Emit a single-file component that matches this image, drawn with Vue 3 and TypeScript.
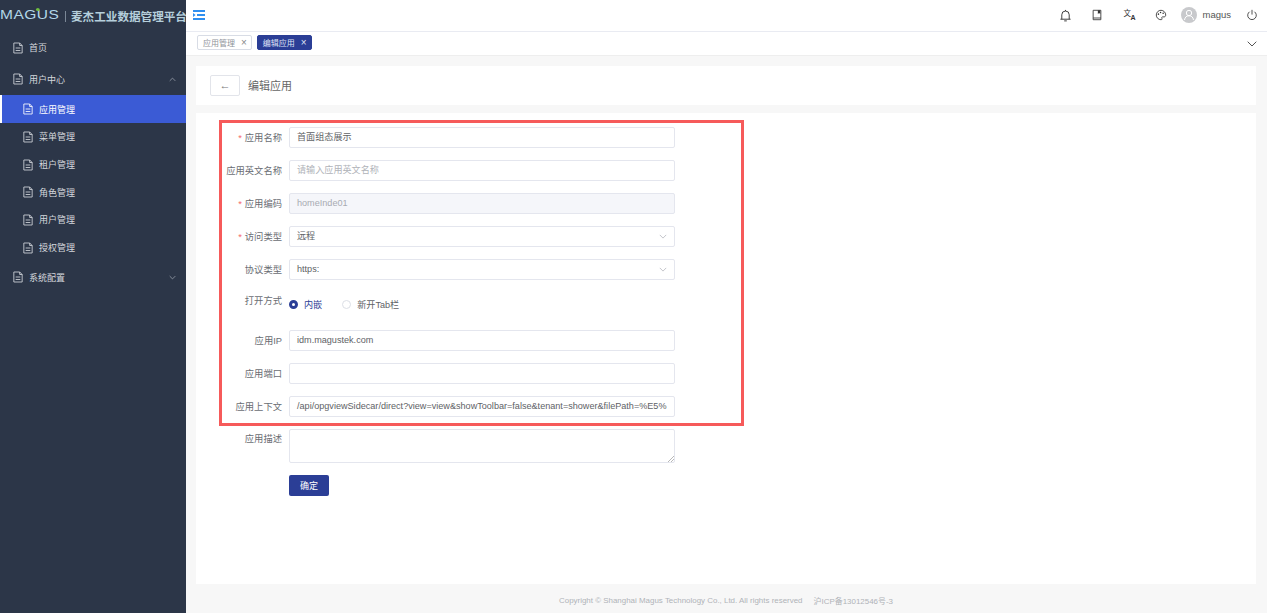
<script setup lang="ts">
interface NavItem { label: string; active?: boolean }
const children: NavItem[] = [
  { label: '应用管理', active: true },
  { label: '菜单管理' },
  { label: '租户管理' },
  { label: '角色管理' },
  { label: '用户管理' },
  { label: '授权管理' },
]
</script>

<template>
  <div class="app">
    <aside class="side">
      <div class="logo">
        <span class="mark">MAGUS<i class="leaf"></i></span><i class="bar"></i><span class="name">麦杰工业数据管理平台</span>
      </div>
      <div class="top item home"><svg class="doc" viewBox="0 0 12 14"><path d="M1 1h7l3 3v9H1zM8 1v3h3M3.2 7h5.6M3.2 10h5.6" /></svg>首页</div>
      <div class="top item"><svg class="doc" viewBox="0 0 12 14"><path d="M1 1h7l3 3v9H1zM8 1v3h3M3.2 7h5.6M3.2 10h5.6" /></svg>用户中心<svg class="arr" viewBox="0 0 10 6"><path d="M1 5l4-4 4 4" /></svg></div>
      <div v-for="c in children" :key="c.label" class="sub item" :class="{ on: c.active }"><svg class="doc" viewBox="0 0 12 14"><path d="M1 1h7l3 3v9H1zM8 1v3h3M3.2 7h5.6M3.2 10h5.6" /></svg>{{ c.label }}</div>
      <div class="top item"><svg class="doc" viewBox="0 0 12 14"><path d="M1 1h7l3 3v9H1zM8 1v3h3M3.2 7h5.6M3.2 10h5.6" /></svg>系统配置<svg class="arr" viewBox="0 0 10 6"><path d="M1 1l4 4 4-4" /></svg></div>
    </aside>

    <main class="main">
      <header class="head">
        <svg class="fold" viewBox="0 0 12 10"><path d="M0 1h12M4 5h8M0 9h12" /><path class="tip" d="M0 3v4l2.600-2z" /></svg>
        <div class="tools">
          <svg class="ic bell" viewBox="0 0 14 14"><path d="M1.500 11h11M3 11V6.200a4 4 0 0 1 8 0V11M7 1v1.200M5.600 12.800h2.800" /></svg>
          <svg class="ic book" viewBox="0 0 14 14"><path d="M2.500 1.500h9v11h-9zM2.500 10.500h9" /><path class="fill" d="M8 1.500h2.800v4.200l-1.400-1-1.400 1z" /></svg>
          <span class="trans"><span>文</span><b>A</b></span>
          <svg class="ic pal" viewBox="0 0 14 14"><path d="M7 1.500a5.500 5.500 0 1 0 0 11c1.400 0 1.500-1 1-1.700-.5-.8 0-1.600 1-1.600h1.500c1.300 0 2-.9 2-2.200 0-3-2.500-5.500-5.500-5.500z" /><circle class="fill" cx="4" cy="6" r=".9" /><circle class="fill" cx="6.500" cy="4" r=".9" /><circle class="fill" cx="9.500" cy="5" r=".9" /></svg>
          <span class="avatar"><svg viewBox="0 0 16 16"><circle cx="8" cy="6" r="2.700" /><path d="M3.500 13c.4-3 2.200-4.200 4.500-4.200s4.100 1.200 4.500 4.200" /></svg></span>
          <span class="who">magus</span>
          <svg class="ic power" viewBox="0 0 14 14"><path d="M4.200 3.200a5 5 0 1 0 5.600 0M7 1v5.500" /></svg>
        </div>
      </header>

      <nav class="tabs">
        <span class="tab">应用管理<em>×</em></span>
        <span class="tab cur">编辑应用<em>×</em></span>
        <svg class="more" viewBox="0 0 10 6"><path d="M.7.7L5 5 9.300.7" /></svg>
      </nav>

      <div class="body">
        <section class="title card">
          <button class="back" type="button">←</button>
          <span class="title-text">编辑应用</span>
        </section>

        <section class="form card">
          <div class="frame"></div>
          <div class="row"><label><s>*</s>应用名称</label><div class="field">首面组态展示</div></div>
          <div class="row"><label>应用英文名称</label><div class="field ph">请输入应用英文名称</div></div>
          <div class="row"><label><s>*</s>应用编码</label><div class="field dis">homeInde01</div></div>
          <div class="row"><label><s>*</s>访问类型</label><div class="field sel">远程<svg viewBox="0 0 10 6"><path d="M1 1l4 4 4-4" /></svg></div></div>
          <div class="row"><label>协议类型</label><div class="field sel">https:<svg viewBox="0 0 10 6"><path d="M1 1l4 4 4-4" /></svg></div></div>
          <div class="row radios">
            <label>打开方式</label>
            <span class="radio picked"><i></i>内嵌</span>
            <span class="radio"><i></i>新开Tab栏</span>
          </div>
          <div class="row"><label>应用IP</label><div class="field">idm.magustek.com</div></div>
          <div class="row"><label>应用端口</label><div class="field"></div></div>
          <div class="row"><label>应用上下文</label><div class="field clip">/api/opgviewSidecar/direct?view=view&amp;showToolbar=false&amp;tenant=shower&amp;filePath=%E5%</div></div>
          <div class="row area"><label>应用描述</label><div class="field big"><svg viewBox="0 0 6 6"><path d="M0 6l6-6M3 6l3-3" /></svg></div></div>
          <div class="row"><label></label><button class="ok" type="button">确定</button></div>
        </section>

        <footer class="foot">Copyright © Shanghai Magus Technology Co., Ltd. All rights reserved<span>沪ICP备13012546号-3</span></footer>
      </div>
    </main>
  </div>
</template>

<style>
html, body { margin: 0; background: #fff; }
</style>

<style scoped>
.app {
  display: flex; width: 1267px; height: 613px; overflow: hidden;
  font-family: "Liberation Sans", "Noto Sans CJK SC", sans-serif;
  font-size: 9px; color: #606266;
}
.side { width: 186px; flex: none; background: #2c3648; color: #d5d8dd; }
.logo { height: 32px; display: flex; align-items: center; white-space: nowrap; overflow: hidden; }
.mark { display: block; position: relative; font-size: 12.500px; letter-spacing: .4px; color: #b3d8ea; width: 59px; flex: none; margin-top: -2px; transform: scaleX(1.240); transform-origin: left center; }
.leaf { position: absolute; left: 29px; top: 0; width: 3px; height: 3px; border-radius: 50%; background: #6fbf3f; }
.bar { width: 1px; height: 11px; background: #7b8796; margin: 0 5px 0 6px; flex: none; }
.name { font-size: 11.600px; font-weight: 700; color: #b5cfdc; flex: none; }
.item { display: flex; align-items: center; font-size: 9px; position: relative; }
.doc { width: 10px; height: 12px; margin-right: 6px; fill: none; stroke: currentColor; stroke-width: 1; flex: none; }
.top { height: 32px; padding-left: 13px; }
.home { height: 31px; }
.sub { height: 27.700px; padding-left: 23px; }
.sub.on { background: #3b5bd5; color: #fff; box-shadow: inset 2px 0 #fff; height: 28px; }
.arr { position: absolute; right: 10px; top: 50%; margin-top: -2.500px; width: 7px; height: 5px; fill: none; stroke: #aab0ba; stroke-width: 1; }
.main { flex: 1; min-width: 0; display: flex; flex-direction: column; }
.head { height: 31px; flex: none; border-bottom: 1px solid #e9ebf2; display: flex; align-items: center; position: relative; background: #fff; }
.fold { width: 12px; height: 10px; margin-left: 7px; margin-top: -1px; fill: none; stroke: #2f8ff0; stroke-width: 2; }
.fold .tip { fill: #2f8ff0; stroke: none; }
.tools { margin-left: auto; display: flex; align-items: center; height: 100%; padding-right: 9px; margin-top: -1px; color: #333; }
.ic { width: 12px; height: 12px; fill: none; stroke: #333; stroke-width: 1; flex: none; }
.ic .fill { fill: #333; stroke: none; }
.bell { width: 13px; height: 13px; }
.book { margin-left: 19px; }
.trans { width: 12px; margin-left: 20px; position: relative; height: 12px; font-size: 7.500px; line-height: 9px; }
.trans b { position: absolute; right: 0; bottom: 0; font-size: 7px; line-height: 7px; }
.pal { margin-left: 20px; }
.avatar { width: 16px; height: 16px; border-radius: 50%; background: #c8c9cc; margin-left: 14px; }
.avatar svg { display: block; width: 16px; height: 16px; fill: none; stroke: #fff; stroke-width: 1; }
.who { margin-left: 5px; font-size: 9.500px; color: #555; margin-top: -2px; }
.power { margin-left: 15px; }
.tabs { height: 23px; flex: none; display: flex; align-items: center; background: #fff; padding-left: 11px; gap: 5px; box-sizing: border-box; position: relative; }
.tab { height: 15px; box-sizing: border-box; border: 1px solid #d8dce5; border-radius: 2px; padding: 0 4px 0 5px; display: flex; align-items: center; font-size: 8px; color: #8f939a; background: #fff; margin-top: -2px; }
.tab em { font-style: normal; font-size: 10px; margin-left: 6px; color: #888; line-height: 1; margin-top: 1px; }
.tab.cur { background: #2b3e96; border-color: #2b3e96; color: #dfe3f5; }
.tab.cur em { color: #dfe3f5; }
.more { position: absolute; right: 10px; top: 9px; width: 10px; height: 6px; fill: none; stroke: #555; stroke-width: 1; }
.body { flex: 1; min-height: 0; background: #f7f7f7; padding: 10px 11px 0 10px; border-top: 1px solid #eeeeee; display: flex; flex-direction: column; box-sizing: border-box; }
.card { background: #fff; }
.title { height: 39px; flex: none; display: flex; align-items: center; padding-left: 14px; font-size: 11px; color: #666; }
.title-text { margin-top: -2px; }
.back { width: 30px; height: 21px; box-sizing: border-box; background: #fff; border: 1px solid #e2e4ea; border-radius: 2px; color: #777; font-size: 11px; line-height: 17px; padding: 0; margin-right: 8px; font-family: inherit; }
.form { margin-top: 8px; height: 471px; flex: none; padding-top: 14px; box-sizing: border-box; position: relative; }
.frame { position: absolute; left: 23px; top: 7px; width: 525px; height: 306px; box-sizing: border-box; border: 3px solid #f65a5a; pointer-events: none; }
.row { display: flex; align-items: center; height: 21px; margin-bottom: 12px; }
.row > label { width: 93px; flex: none; text-align: right; padding-right: 7px; box-sizing: border-box; font-size: 9.300px; color: #6a6d73; white-space: nowrap; margin-top: -2px; }
.row > label s { color: #f56c6c; text-decoration: none; margin-right: 3px; }
.field { width: 386px; height: 21px; box-sizing: border-box; border: 1px solid #e4e6ee; border-radius: 2px; padding: 0 7px; line-height: 19px; font-size: 9.100px; color: #606266; background: #fff; position: relative; white-space: nowrap; overflow: hidden; }
.ph { color: #b0b3b9; }
.dis { background: #f5f6fa; color: #a8abb2; }
.sel svg { position: absolute; right: 7px; top: 7px; width: 8px; height: 5px; fill: none; stroke: #b5b8be; stroke-width: 1; }
.radios { height: 26px; }
.radios > label { margin-top: -11px; }
.radio { display: flex; align-items: center; font-size: 9.100px; color: #606266; margin-right: 20px; margin-top: -2px; }
.radio i { width: 9px; height: 9px; border-radius: 50%; border: 1px solid #dcdfe6; margin-right: 6px; box-sizing: border-box; }
.radio.picked { color: #2b3e96; }
.radio.picked i { border: 3px solid #2b3e96; background: #fff; }
.area { height: 34px; align-items: flex-start; }
.area > label { line-height: 19px; margin-top: 1px; }
.big { height: 34px; }
.big svg { position: absolute; right: 0; bottom: 0; width: 6px; height: 6px; stroke: #999; stroke-width: .7; fill: none; }
.ok { width: 40px; height: 21px; background: #2b3e96; border: none; border-radius: 2px; color: #fff; font-size: 9px; padding: 0; font-family: inherit; }
.foot { flex: 1; display: flex; align-items: center; justify-content: center; font-size: 7.950px; color: #b0b3b8; padding-top: 3px; }
.foot span { margin-left: 11px; }
</style>
